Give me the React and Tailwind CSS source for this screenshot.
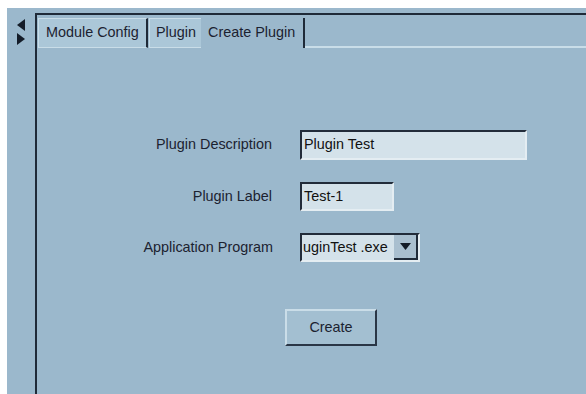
export default function App() {
  const font = { fontFamily: '"Liberation Sans", Arial, sans-serif' };

  return (
    <div className="w-[586px] h-[394px] bg-white pt-[8px] pl-[7px] overflow-hidden" style={font}>
      <div className="flex h-full bg-[#9bb8cc] text-[#1b2230]">
        {/* scroll arrows */}
        <div className="w-[28px] shrink-0 pt-[11px] pl-[10px]">
          <svg width="9" height="27" viewBox="0 0 9 27">
            <polygon points="8,0 8,12 0,6" fill="#141c28" />
            <polygon points="0,14 0,26 8,20" fill="#141c28" />
          </svg>
        </div>

        {/* panel */}
        <div className="flex-1 flex flex-col mt-[5px] border-l-2 border-t-2 border-[#1f2a38]">
          {/* tabs */}
          <div className="flex h-[33px] pl-[1px] pt-[3px] whitespace-nowrap">
            <div className="shrink-0 flex items-center px-[7px] bg-[#abc7d8] border-t border-l border-[#c9dde8] border-r-2 border-r-[#1f2a38] border-b border-b-[#c9dde8] text-[14.4px] w-[110px]">
              Module Config
            </div>
            <div className="shrink-0 flex items-center ml-[1px] px-[6px] bg-[#abc7d8] border-t border-l border-[#c9dde8] border-b border-b-[#c9dde8] text-[14.4px] w-[52px]">
              Plugin
            </div>
            <div className="shrink-0 flex items-center pl-[7px] border-r-2 border-[#1f2a38] text-[14.4px] w-[104px]">
              Create Plugin
            </div>
            <div className="flex-1 border-b-2 border-[#c9dde8]" />
          </div>

          {/* form */}
          <div className="flex flex-col gap-[22px] mt-[82px]">
            <div className="flex items-center">
              <div className="w-[235px] text-right text-[14.4px]">Plugin Description</div>
              <div className="ml-[28px] w-[227px] h-[30px] flex items-center pl-[2px] bg-[#d4e2ea] border-t-2 border-l-2 border-[#222c3a] border-r-2 border-b-2 border-r-[#e4edf2] border-b-[#e4edf2] text-[14.4px] text-[#111]">
                Plugin Test
              </div>
            </div>
            <div className="flex items-center">
              <div className="w-[235px] text-right text-[14.4px]">Plugin Label</div>
              <div className="ml-[28px] w-[94px] h-[29px] flex items-center pl-[2px] bg-[#d4e2ea] border-t-2 border-l-2 border-[#222c3a] border-r-2 border-b-2 border-r-[#e4edf2] border-b-[#e4edf2] text-[14.4px] text-[#111]">
                Test-1
              </div>
            </div>
            <div className="flex items-center">
              <div className="w-[236px] text-right text-[14.4px]">Application Program</div>
              <div className="ml-[27px] w-[120px] h-[29px] flex bg-[#d4e2ea] border-t-2 border-l-2 border-[#222c3a] border-r-2 border-b-2 border-r-[#e4edf2] border-b-[#e4edf2]">
                <div className="flex-1 flex items-center pl-[1px] text-[14.4px] text-[#111] overflow-hidden whitespace-nowrap">
                  uginTest .exe
                </div>
                <div className="w-[24px] flex items-center justify-center bg-[#a9bfcf] border-r-2 border-b-2 border-[#1f2a38]">
                  <svg width="11" height="7" viewBox="0 0 11 7">
                    <polygon points="0,0 11,0 5.5,7" fill="#141c28" />
                  </svg>
                </div>
              </div>
            </div>
          </div>

          <div className="mt-[47px] ml-[248px]">
            <button className="w-[92px] h-[37px] flex items-center justify-center bg-[#a3bfd1] border-t-2 border-l-2 border-[#cadde8] border-r-2 border-b-2 border-r-[#2a3646] border-b-[#2a3646] text-[14.4px] text-[#1b2230]">
              Create
            </button>
          </div>
        </div>
      </div>
    </div>
  );
}
